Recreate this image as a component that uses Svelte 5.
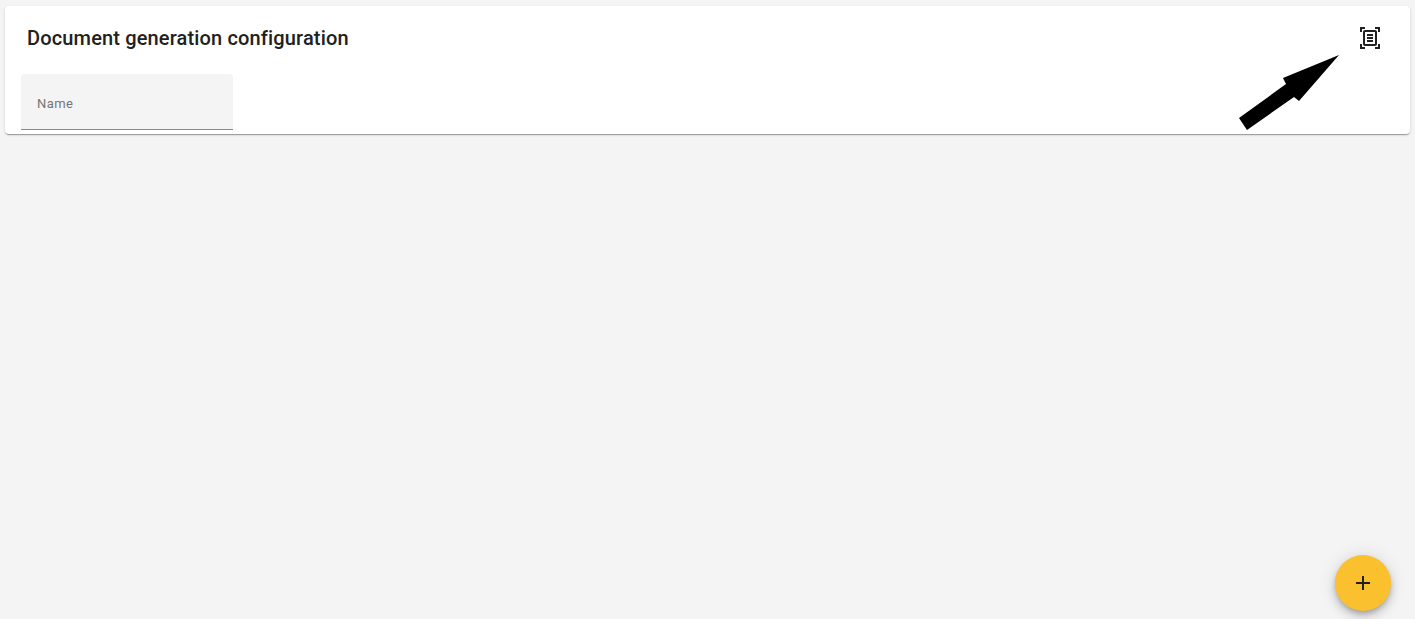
<script>
  let name = $state('');
</script>

<div class="page">
  <section class="card">
    <header class="card-head">
      <h1>Document generation configuration</h1>
      <button class="icon-btn" aria-label="Scan document">
        <svg viewBox="0 0 24 24" width="24" height="24">
          <path d="M7 3H4v3H2V1h5v2zm15 3V1h-5v2h3v3h2zM7 21H4v-3H2v5h5v-2zm13-3v3h-3v2h5v-5h-2zM17 6H7v12h10V6zm2 12c0 1.1-.9 2-2 2H7c-1.100 0-2-.9-2-2V6c0-1.100.9-2 2-2h10c1.100 0 2 .9 2 2v12zM15 8H9v2h6V8zm0 3H9v2h6v-2zm0 3H9v2h6v-2z" />
        </svg>
      </button>
    </header>
    <label class="field">
      <input type="text" placeholder="Name" bind:value={name} />
    </label>
  </section>

  <svg class="arrow" viewBox="0 0 1415 619" width="1415" height="619" aria-hidden="true">
    <polygon points="1339,55 1283,78 1286,84 1239,118 1247,130 1294,97 1299,101" />
  </svg>

  <button class="fab" aria-label="Add">
    <svg viewBox="0 0 24 24" width="24" height="24">
      <path d="M19 13h-6v6h-2v-6H5v-2h6V5h2v6h6v2z" />
    </svg>
  </button>
</div>

<style>
  :global(body) {
    background: #f4f4f4;
    font-family: Roboto, "Liberation Sans", sans-serif;
  }

  .page {
    height: 619px;
    box-sizing: border-box;
    padding: 6px 5px 0;
    overflow: hidden;
  }

  .card {
    height: 128px;
    box-sizing: border-box;
    background: #fff;
    border-radius: 4px;
    box-shadow: 0 2px 1px -1px rgba(0, 0, 0, 0.2), 0 1px 1px 0 rgba(0, 0, 0, 0.14), 0 1px 3px 0 rgba(0, 0, 0, 0.12);
    padding: 0 16px;
  }

  .card-head {
    display: flex;
    justify-content: space-between;
    align-items: center;
    height: 64px;
    padding: 0 12px 0 6px;
    margin-bottom: 4px;
  }

  h1 {
    margin: 0;
    font-size: 20px;
    font-weight: 500;
    letter-spacing: 0.15px;
    color: #212121;
  }

  .icon-btn {
    width: 24px;
    height: 24px;
    padding: 0;
    border: none;
    background: none;
    display: block;
  }

  .icon-btn svg {
    display: block;
    fill: #212121;
  }

  .field {
    display: block;
    width: 212px;
    height: 56px;
    box-sizing: border-box;
    background: #f4f4f4;
    border-radius: 4px 4px 0 0;
    border-bottom: 1px solid #8a8a8a;
  }

  input {
    width: 100%;
    height: 100%;
    box-sizing: border-box;
    border: none;
    outline: none;
    background: none;
    padding: 3px 16px 0;
    font-family: inherit;
    font-size: 13px;
    letter-spacing: 0.4px;
    color: #212121;
  }

  input::placeholder {
    color: #757575;
    opacity: 1;
  }

  .arrow {
    position: absolute;
    left: 0;
    top: 0;
    pointer-events: none;
  }

  .fab {
    position: absolute;
    left: 1335px;
    top: 555px;
    width: 56px;
    height: 56px;
    padding: 16px;
    border: none;
    border-radius: 50%;
    background: #fbc02d;
    box-shadow: 0 3px 5px -1px rgba(0, 0, 0, 0.2), 0 6px 10px 0 rgba(0, 0, 0, 0.14), 0 1px 18px 0 rgba(0, 0, 0, 0.12);
  }

  .fab svg {
    display: block;
    fill: #212121;
  }
</style>
